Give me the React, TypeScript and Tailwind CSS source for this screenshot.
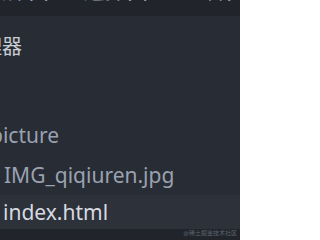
import React from "react";

export default function App() {
  const font = { fontFamily: '"Noto Sans", "Noto Sans CJK SC", sans-serif' };
  return (
    <div className="w-[240px] h-[240px] overflow-hidden bg-[#282c34] flex flex-col" style={font}>
      <div className="h-[16px] shrink-0 overflow-hidden bg-[#21252b]">
        <div className="flex -mt-[21px] ml-[-15px] gap-[33px] text-[21px] leading-[22px] text-[#9da5b4] whitespace-nowrap">
          <span>文件(F)</span>
          <span>选择(S)</span>
          <span>查看(V)</span>
        </div>
      </div>
      <div className="mt-[21px] h-[20px] text-[20px] leading-[20px] text-[#c9cdd5] whitespace-nowrap ml-[-78px]">
        资源管理器
      </div>
      <div className="h-[58px] shrink-0" />
      <div className="h-[40px] leading-[40px] text-[21px] text-[#9aa2b1] whitespace-nowrap ml-[-10px]">
        picture
      </div>
      <div className="h-[40px] leading-[40px] text-[21px] text-[#9aa2b1] whitespace-nowrap pl-[4px]">
        IMG_qiqiuren.jpg
      </div>
      <div className="h-[34px] leading-[34px] text-[21px] text-[#d7dae0] bg-[#2c313a] whitespace-nowrap pl-[3px]">
        index.html
      </div>
      <div className="flex-1 bg-[#21252b] flex items-start justify-end pr-[3px]">
        <span className="text-[6px] leading-[8px] text-[#5c6370]">@稀土掘金技术社区</span>
      </div>
    </div>
  );
}
